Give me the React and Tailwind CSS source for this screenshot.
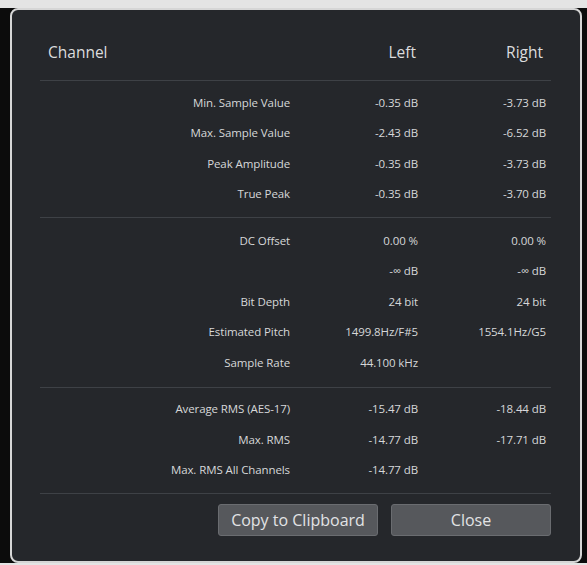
import React from 'react';

const font = { fontFamily: '"Open Sans", "Noto Sans", sans-serif' };

const sections = [
  [
    ['Min. Sample Value', '-0.35 dB', '-3.73 dB'],
    ['Max. Sample Value', '-2.43 dB', '-6.52 dB'],
    ['Peak Amplitude', '-0.35 dB', '-3.73 dB'],
    ['True Peak', '-0.35 dB', '-3.70 dB'],
  ],
  [
    ['DC Offset', '0.00 %', '0.00 %'],
    ['', '-∞ dB', '-∞ dB'],
    ['Bit Depth', '24 bit', '24 bit'],
    ['Estimated Pitch', '1499.8Hz/F#5', '1554.1Hz/G5'],
    ['Sample Rate', '44.100 kHz', ''],
  ],
  [
    ['Average RMS (AES-17)', '-15.47 dB', '-18.44 dB'],
    ['Max. RMS', '-14.77 dB', '-17.71 dB'],
    ['Max. RMS All Channels', '-14.77 dB', ''],
  ],
];

const Row = ({ label, left, right }) => (
  <div className="grid grid-cols-[250px_128px_128px] h-[30.5px] items-center text-right text-[11.5px] text-[#d6d7d9] tracking-[-0.1px]">
    <span>{label}</span>
    <span>{left}</span>
    <span>{right}</span>
  </div>
);

export default function App() {
  return (
    <div className="w-[587px] h-[565px] bg-[#e4e4e4] pt-[8px] overflow-hidden" style={font}>
      <div className="h-[555px] bg-[#0c0c0c] pl-[10px] pr-[5px] flex">
        <div className="flex-1 h-[555px] rounded-[8px] border-2 border-[#d6d6d6] bg-[#25272b] pl-[28px] pr-[29px] pt-[28px]">
          {/* header */}
          <div className="grid grid-cols-[250px_128px_128px] h-[30px] items-center text-[15.5px] text-[#dcdcde]">
            <span className="pl-[8px]">Channel</span>
            <span className="text-right pr-[2px]">Left</span>
            <span className="text-right pr-[3px]">Right</span>
          </div>
          <div className="mt-[12px] h-px bg-[#3e4146]" />

          {sections.map((rows, i) => (
            <div key={i}>
              <div className={i === 1 ? 'pt-[7px] pb-[9px]' : 'pt-[6px] pb-[8px]'}>
                {rows.map(([label, left, right], j) => (
                  <Row key={j} label={label} left={left} right={right} />
                ))}
              </div>
              <div className="h-px bg-[#3e4146]" />
            </div>
          ))}

          {/* buttons */}
          <div className="mt-[10px] flex justify-end gap-[13px]">
            <button className="w-[160px] h-[32px] rounded-[3px] border border-[#6a6c70] bg-[#56585c] text-[16px] text-[#e2e3e5]">
              Copy to Clipboard
            </button>
            <button className="w-[160px] h-[32px] rounded-[3px] border border-[#6a6c70] bg-[#56585c] text-[16px] text-[#e2e3e5]">
              Close
            </button>
          </div>
        </div>
      </div>
    </div>
  );
}
